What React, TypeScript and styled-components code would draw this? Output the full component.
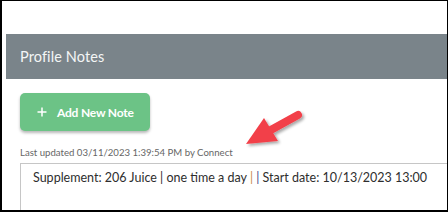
import React from 'react';
import styled, { createGlobalStyle } from 'styled-components';

const GlobalStyle = createGlobalStyle`
  html, body {
    margin: 0;
    padding: 0;
    background: #ffffff;
  }
  body {
    font-family: Lato, 'Open Sans', sans-serif;
  }
`;

const Frame = styled.div`
  position: relative;
  width: 448px;
  height: 212px;
  box-sizing: border-box;
  border: 2px solid #000;
  border-top-width: 1px;
  border-right-width: 1px;
  background: #fff;
  overflow: hidden;
  padding-top: 33px;
`;

const PanelHeader = styled.div`
  margin-left: 4px;
  height: 45px;
  background: #7a848a;
  display: flex;
  align-items: center;
  padding-left: 14px;
  padding-bottom: 1px;
  box-sizing: border-box;
`;

const PanelTitle = styled.h2`
  margin: 0;
  font-size: 14.5px;
  font-weight: 400;
  color: #f4f6f6;
  letter-spacing: 0.1px;
`;

const PanelBody = styled.div`
  padding: 14px 0 0 18px;
  display: flex;
  flex-direction: column;
  align-items: flex-start;
`;

const AddButton = styled.button`
  display: flex;
  align-items: center;
  gap: 10px;
  width: 130px;
  height: 38px;
  padding: 0 0 0 17px;
  border: none;
  border-radius: 5px;
  background: #6cc386;
  color: #fff;
  font-family: Lato, sans-serif;
  font-size: 12px;
  font-weight: 700;
  letter-spacing: -0.2px;
  box-shadow: 0 2px 3px rgba(0, 0, 0, 0.28);
  cursor: pointer;
`;

const Updated = styled.div`
  margin-top: 16px;
  font-size: 9.6px;
  color: #666;
  line-height: 12px;
`;

const NoteBox = styled.div`
  margin-top: 4px;
  width: 460px;
  height: 60px;
  box-sizing: border-box;
  border: 1px solid #c6c6c6;
  padding: 6px 12px;
  font-size: 12.5px;
  line-height: 16px;
  color: #2e2e2e;
  white-space: nowrap;
`;

const Pipe = styled.span<{ $tint: string }>`
  color: ${p => p.$tint};
`;

const Arrow = styled.svg`
  position: absolute;
  left: 236px;
  top: 100px;
  overflow: visible;
`;

const PlusIcon = () => (
  <svg width="10" height="10" viewBox="0 0 10 10">
    <path d="M5 0.5V9.5M0.5 5H9.5" stroke="#fff" strokeWidth="1.5" />
  </svg>
);

export default function App() {
  return (
    <>
      <GlobalStyle />
      <Frame>
        <PanelHeader>
          <PanelTitle>Profile Notes</PanelTitle>
        </PanelHeader>
        <PanelBody>
          <AddButton>
            <PlusIcon />
            Add New Note
          </AddButton>
          <Updated>Last updated 03/11/2023 1:39:54 PM by Connect</Updated>
          <NoteBox>
            Supplement: 206 Juice | one time a day <Pipe $tint="#c98a4a">|</Pipe>{' '}
            <Pipe $tint="#46468a">|</Pipe> Start date: 10/13/2023 13:00
          </NoteBox>
        </PanelBody>
        {/* annotation arrow, coords relative to left:236 top:100 (frame inner) */}
        <Arrow width="80" height="60" viewBox="0 0 80 60">
          <defs>
            <filter id="sh" x="-30%" y="-30%" width="160%" height="160%">
              <feGaussianBlur in="SourceAlpha" stdDeviation="1.6" />
              <feOffset dx="2" dy="2" result="b" />
              <feComponentTransfer>
                <feFuncA type="linear" slope="0.35" />
              </feComponentTransfer>
              <feMerge>
                <feMergeNode />
                <feMergeNode in="SourceGraphic" />
              </feMerge>
            </filter>
          </defs>
          <g filter="url(#sh)">
            <path d="M60 14 L31 30" stroke="#f2404a" strokeWidth="8" strokeLinecap="round" />
            <path d="M8 43 L26 17 L40 40 Z" fill="#f2404a" />
          </g>
        </Arrow>
      </Frame>
    </>
  );
}
